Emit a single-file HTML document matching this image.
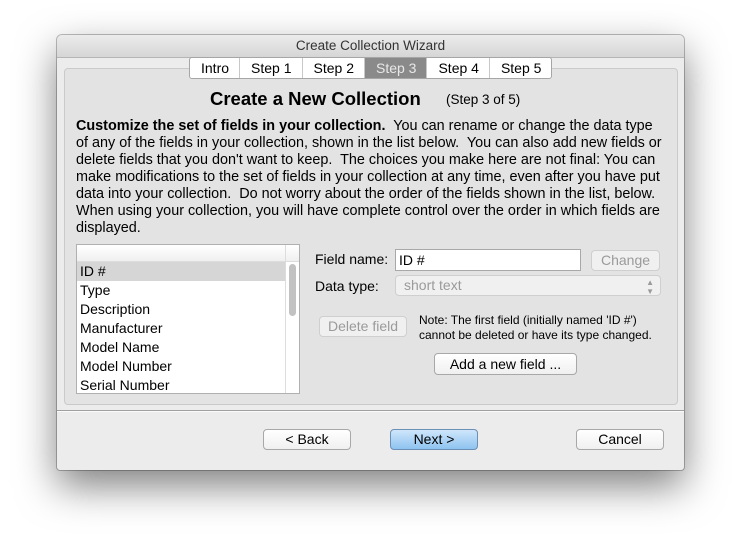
<!DOCTYPE html><html><head><style>
body{margin:0;width:741px;height:549px;background:#fff;position:relative;overflow:hidden;font-family:"Liberation Sans","DejaVu Sans",sans-serif;color:#000}
.a{position:absolute}
.win{left:57px;top:35px;width:627px;height:435px;background:#ececec;border-radius:5px 5px 3px 3px;box-shadow:0 16px 40px rgba(0,0,0,.5),0 0 0 1px rgba(0,0,0,.25)}
.tb{left:57px;top:35px;width:627px;height:22px;border-radius:5px 5px 0 0;background:linear-gradient(#ececec,#d6d6d6);border-bottom:1px solid #b5b5b5;text-align:center;font-size:13.5px;line-height:22px;color:#333}
.panel{left:64px;top:68px;width:612px;height:335px;background:#e3e3e3;border:1px solid #cacaca;border-radius:4px}
.tabs{left:189px;top:57px;height:20px;display:flex;border:1px solid #a6a6a6;border-radius:3px;background:#fff;font-size:14px;line-height:20px;overflow:hidden}
.tabs div{padding:0 10px 0 11px;border-left:1px solid #c8c8c8}
.tabs div:first-child{border-left:none}
.tabs .s{background:#8a8a8a;color:#e8e8e8}
.p{left:76px;top:118px;font-size:14.4px;line-height:17px;white-space:nowrap}
.btn{position:absolute;border:1px solid #a8a8a8;border-radius:4px;background:linear-gradient(#fff,#f0f0f0);text-align:center;font-size:14px;box-sizing:border-box}
.dis{color:#9a9a9a;border-color:#cfcfcf;background:#f0f0f0}
.list{left:76px;top:244px;width:224px;height:150px;background:#fff;border:1px solid #b0b0b0;box-sizing:border-box;overflow:hidden}
.list div{height:19px;line-height:19px;padding-left:3px;font-size:14px}
</style></head><body>
<div class="a win"></div>
<div class="a tb">Create Collection Wizard</div>
<div class="a panel"></div>
<div class="a tabs"><div>Intro</div><div>Step 1</div><div>Step 2</div><div class="s">Step 3</div><div>Step 4</div><div>Step 5</div></div>
<div class="a" style="left:210px;top:88px;font-size:18.5px;font-weight:bold">Create a New Collection</div>
<div class="a" style="left:446px;top:92px;font-size:13.5px">(Step 3 of 5)</div>
<div class="a p"><b>Customize the set of fields in your collection.</b>&nbsp; You can rename or change the data type<br>of any of the fields in your collection, shown in the list below.&nbsp; You can also add new fields or<br>delete fields that you don't want to keep.&nbsp; The choices you make here are not final: You can<br>make modifications to the set of fields in your collection at any time, even after you have put<br>data into your collection.&nbsp; Do not worry about the order of the fields shown in the list, below.<br>When using your collection, you will have complete control over the order in which fields are<br>displayed.</div>
<div class="a list">
<div style="height:16px;background:linear-gradient(#fff,#f0f0f0);border-bottom:1px solid #ddd"></div>
<div style="background:#d6d6d6;margin-right:14px">ID #</div><div>Type</div><div>Description</div><div>Manufacturer</div><div>Model Name</div><div>Model Number</div><div>Serial Number</div>
</div>
<div class="a" style="left:285px;top:245px;width:1px;height:148px;background:#ddd"></div>
<div class="a" style="left:289px;top:264px;width:7px;height:52px;background:#c2c2c2;border-radius:4px"></div>
<div class="a" style="left:315px;top:251px;font-size:14px">Field name:</div>
<div class="a" style="left:395px;top:249px;width:186px;height:22px;border:1px solid #a8a8a8;background:#fff;box-sizing:border-box;font-size:14px;line-height:21px;padding-left:3px">ID #</div>
<div class="btn dis" style="left:591px;top:250px;width:69px;height:21px;line-height:19px">Change</div>
<div class="a" style="left:315px;top:278px;font-size:14px">Data type:</div>
<div class="btn dis" style="left:395px;top:275px;width:266px;height:21px;line-height:19px;text-align:left;padding-left:8px">short text<span style="position:absolute;right:6px;top:0;font-size:8px;line-height:9px;padding-top:2px">▲<br>▼</span></div>
<div class="btn dis" style="left:319px;top:316px;width:88px;height:21px;line-height:19px">Delete field</div>
<div class="a" style="left:419px;top:313px;font-size:12px;line-height:15px">Note: The first field (initially named 'ID #')<br>cannot be deleted or have its type changed.</div>
<div class="btn" style="left:434px;top:353px;width:143px;height:22px;line-height:20px">Add a new field ...</div>
<div class="a" style="left:57px;top:410px;width:627px;height:1px;background:#a0a0a0"></div>
<div class="a" style="left:57px;top:411px;width:627px;height:1px;background:#fafafa"></div>
<div class="btn" style="left:263px;top:429px;width:88px;height:21px;line-height:19px">&lt; Back</div>
<div class="btn" style="left:390px;top:429px;width:88px;height:21px;line-height:19px;background:linear-gradient(#cfe6fb,#8ec3f0);border-color:#6c8fb5">Next &gt;</div>
<div class="btn" style="left:576px;top:429px;width:88px;height:21px;line-height:19px">Cancel</div>
</body></html>
